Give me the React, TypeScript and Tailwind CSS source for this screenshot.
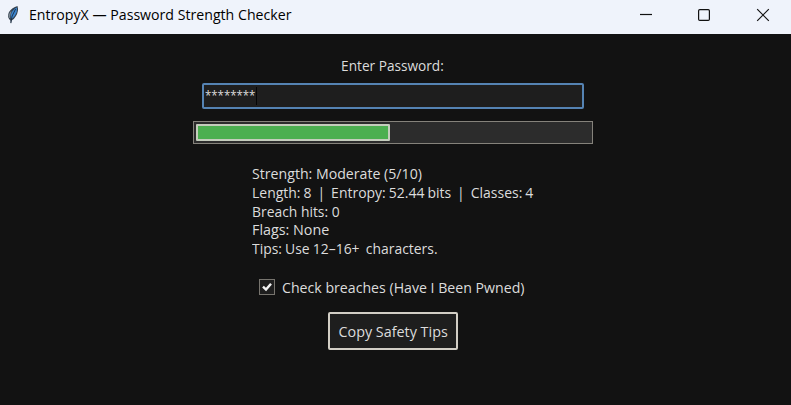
const stats = [
  { text: 'Strength: Moderate (5/10)', fit: 'scale-x-[0.943]' },
  { text: 'Length: 8  |  Entropy: 52.44 bits  |  Classes: 4', fit: 'scale-x-[0.932] [word-spacing:-0.7px]' },
  { text: 'Breach hits: 0', fit: 'scale-x-[0.925]' },
  { text: 'Flags: None', fit: 'scale-x-[0.955]' },
  { text: 'Tips: Use 12–16+  characters.', fit: 'scale-x-[0.927] [word-spacing:-0.5px]' },
];

function Feather() {
  return (
    <svg className="ml-[6px] mb-[5px] h-5 w-[14px] shrink-0" viewBox="0 0 14 20">
      <path d="M5 19 L4.4 15.5 Q0.6 12 3 7 Q6 2.5 11.5 1 Q13 6 10 11 Q8 14.5 5.6 15.5Z" fill="#34414f" />
      <path d="M5 14 Q4 9 7 5.5 Q9 3 11 2.5 Q11.5 7 9 10.5 Q7.5 13 5 14Z" fill="#3c86d0" />
      <path d="M3 13 Q1.8 9 5.5 5.5 L3.8 13Z" fill="#7c8791" />
      <path d="M4.8 18 Q5 11 9.6 4" fill="none" stroke="#172a40" strokeWidth="0.9" />
    </svg>
  );
}

export default function App() {
  return (
    <div className="flex h-[405px] w-[791px] flex-col overflow-hidden bg-[#121212] font-['Open_Sans','Noto_Sans',sans-serif] text-[15px] text-[#dcdcdc]">
      <header className="flex h-[34px] shrink-0 items-center bg-[#eff3fb] text-black">
        <Feather />
        <h1 className="ml-[9px] mb-[6px] origin-left scale-x-[0.943] whitespace-nowrap leading-5">EntropyX — Password Strength Checker</h1>
        <svg className="ml-auto mr-[20px] h-[34px] w-[132px] shrink-0" viewBox="639 0 132 34" fill="none" stroke="#111" strokeWidth="1.2">
          <path d="M640 14.5h12" />
          <rect x="698.6" y="9.6" width="10.8" height="10.8" rx="1.2" />
          <path d="M757.2 9.2l11.6 11.6M768.8 9.2l-11.6 11.6" />
        </svg>
      </header>
      <main className="flex flex-col items-center pr-[5px]">
        <label className="mt-[21px] mr-[1px] h-5 scale-x-[0.91] whitespace-nowrap leading-5">Enter Password:</label>
        <div className="mt-[8px] mr-[1px] flex h-[26px] w-[382px] rounded-[2px] border-2 border-[#5583b3] bg-[#1e1e1e] pl-[1px]">
          <span className="w-[51px] shrink-0 origin-left scale-x-[0.88] text-[13px] leading-[20px]">********</span>
          <i className="mt-[2px] h-[18px] w-px bg-[#050505]" />
        </div>
        <div className="mt-[12px] h-[23px] w-[400px] border border-[#85827b] bg-[#2c2c2c] p-[2px]">
          <div className="h-[17px] w-[194px] rounded-[1px] border-2 border-[#c5cdbd] bg-[#4caf50]" />
        </div>
        <div className="mt-[20px] mr-[1px] w-[282px]">
          {stats.map((s) => (
            <p key={s.text} className="h-[18.75px] whitespace-pre leading-[18.75px]">
              <span className={`inline-block origin-left ${s.fit}`}>{s.text}</span>
            </p>
          ))}
        </div>
        <div className="mt-[19px] flex h-5 w-[268px] items-center">
          <svg className="h-4 w-4 shrink-0" viewBox="0 0 16 16">
            <rect x="0.5" y="0.5" width="15" height="15" fill="#1e1e1e" stroke="#77746e" />
            <path d="M4 7.7 L7 10.6 L12 4.8" fill="none" stroke="#f2f2f2" strokeWidth="2.4" />
          </svg>
          <span className="ml-[7px] origin-left scale-x-[0.943] whitespace-nowrap leading-5">Check breaches (Have I Been Pwned)</span>
        </div>
        <button className="mt-[15px] flex h-[38px] w-[130px] items-center justify-center rounded-[2px] border-2 border-[#d2cec5] bg-[#1e1e1e]">
          <span className="inline-block scale-x-[0.957] whitespace-nowrap leading-5">Copy Safety Tips</span>
        </button>
      </main>
    </div>
  );
}
